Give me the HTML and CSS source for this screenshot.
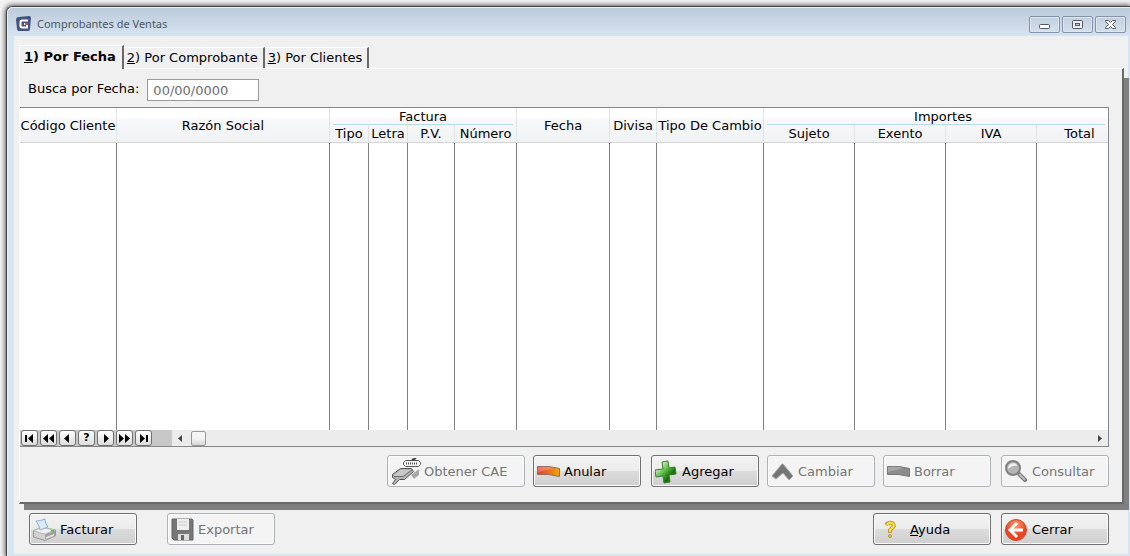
FILE: index.html
```
<!DOCTYPE html>
<html lang="es">

<head>
    <meta charset="UTF-8">
    <meta name="viewport" content="width=device-width, initial-scale=1.0">
    <title>Comprobantes de Ventas</title>
    <link rel="stylesheet" href="styles.css">
</head>

<body>
    <div class="window">
        <div class="title-bar">
            <svg class="logo" width="16" height="16" viewBox="0 0 16 16">
                <path d="M3 1 L13 0 Q15 0 15 2 L14 13 Q14 15 12 15 L3 15 Q1 15 1 13 L0 4 Q0 1 3 1Z" fill="#46527f"/>
                <path d="M12 4.500H6Q4.500 4.500 4.500 6V10Q4.500 11.500 6 11.500H11V8H8" fill="none" stroke="#fff" stroke-width="2"/>
                <path d="M9 7H12V9H9Z" fill="#e04040"/>
            </svg>
            <span class="title">Comprobantes de Ventas</span>
            <button class="caption" aria-label="Minimizar">
                <svg width="13" height="13" viewBox="0 0 13 13"><rect x="1.500" y="6.500" width="10" height="4" rx="1" fill="#fff" stroke="#535666"/></svg>
            </button>
            <button class="caption" aria-label="Maximizar">
                <svg width="13" height="13" viewBox="0 0 13 13"><rect x="1.500" y="2.500" width="10" height="8" rx="1" fill="#eee" stroke="#535666"/><rect x="4.500" y="5.500" width="4" height="2" fill="#c5d1de" stroke="#535666"/></svg>
            </button>
            <button class="caption" aria-label="Cerrar ventana">
                <svg width="13" height="13" viewBox="0 0 13 13"><path d="M1.500 2.500H4.500L6.500 4.500L8.500 2.500H11.500V3.500L8.500 6.500L11.500 9.500V10.500H8.500L6.500 8.500L4.500 10.500H1.500V9.500L4.500 6.500L1.500 3.500Z" fill="#fff" stroke="#535666"/></svg>
            </button>
        </div>

        <div class="content">
            <div class="tabs" role="tablist">
                <button class="tab active" role="tab" aria-selected="true"><u>1</u>) Por Fecha</button>
                <button class="tab" role="tab"><u>2</u>) Por Comprobante</button>
                <button class="tab" role="tab"><u>3</u>) Por Clientes</button>
            </div>

            <div class="panel">
                <div class="search">
                    <label for="fecha">Busca por Fecha:</label>
                    <input type="text" id="fecha" placeholder="00/00/0000">
                </div>

                <div class="browse">
                    <table>
                        <colgroup>
                            <col class="c-codigo"><col class="c-razon"><col class="c-tipo"><col class="c-tipo">
                            <col class="c-pv"><col class="c-numero"><col class="c-fecha"><col class="c-pv">
                            <col class="c-cambio"><col class="c-importe"><col class="c-importe"><col class="c-importe"><col>
                        </colgroup>
                        <thead>
                            <tr>
                                <th rowspan="2">Código Cliente</th>
                                <th rowspan="2">Razón Social</th>
                                <th class="group" colspan="4">Factura</th>
                                <th rowspan="2">Fecha</th>
                                <th rowspan="2">Divisa</th>
                                <th rowspan="2">Tipo De Cambio</th>
                                <th class="group total" colspan="4">Importes</th>
                            </tr>
                            <tr class="sub">
                                <th>Tipo</th>
                                <th>Letra</th>
                                <th>P.V.</th>
                                <th>Número</th>
                                <th>Sujeto</th>
                                <th>Exento</th>
                                <th>IVA</th>
                                <th class="total">Total</th>
                            </tr>
                        </thead>
                        <tbody>
                            <tr>
                                <td></td><td></td><td></td><td></td><td></td><td></td><td></td>
                                <td></td><td></td><td></td><td></td><td></td><td></td>
                            </tr>
                        </tbody>
                    </table>
                    <div class="nav">
                        <div class="vcr">
                            <button aria-label="Primero"><svg width="13" height="9" viewBox="0 0 13 9"><path d="M2 1H4V8H2ZM10 0V9L5 4.500Z"/></svg></button>
                            <button aria-label="Página anterior"><svg width="13" height="9" viewBox="0 0 13 9"><path d="M6 0V9L1 4.500ZM12 0V9L7 4.500Z"/></svg></button>
                            <button aria-label="Anterior"><svg width="13" height="9" viewBox="0 0 13 9"><path d="M8 0V9L3 4.500Z"/></svg></button>
                            <button>?</button>
                            <button aria-label="Siguiente"><svg width="13" height="9" viewBox="0 0 13 9"><path d="M5 0V9L10 4.500Z"/></svg></button>
                            <button aria-label="Página siguiente"><svg width="13" height="9" viewBox="0 0 13 9"><path d="M1 0V9L6 4.500ZM7 0V9L12 4.500Z"/></svg></button>
                            <button aria-label="Último"><svg width="13" height="9" viewBox="0 0 13 9"><path d="M3 0V9L8 4.500ZM9 1H11V8H9Z"/></svg></button>
                        </div>
                        <div class="scroll">
                            <svg width="5" height="7" viewBox="0 0 5 7"><path d="M4 0V7L0 3.500Z" fill="#444"/></svg>
                            <span class="thumb"></span>
                            <svg class="right" width="5" height="7" viewBox="0 0 5 7"><path d="M1 0V7L5 3.500Z" fill="#444"/></svg>
                        </div>
                    </div>
                </div>

                <div class="actions">
                    <button class="btn wide" disabled>
                        <svg width="30" height="28" viewBox="0 0 30 28">
                            <path d="M20 17L28 11V17L23 21Z" fill="#a8a8a8"/>
                            <path d="M12.500 4.500L14.500 2.500H27.500L29.500 4.500V6.500L27.500 8.500H14.500L12.500 6.500Z" fill="#f4f4f4" stroke="#555"/>
                            <path d="M15 5.500H27" stroke="#555" stroke-width="2" stroke-dasharray="1 1"/>
                            <path d="M21 2L25 0" stroke="#444" stroke-width="2"/>
                            <path d="M1.500 16.500L9.500 10.500H20.500L22.500 13.500L13.500 21.500H8.500L3.500 26.500L1.500 25.500L4.500 21.500L1.500 19.500Z" fill="#b4b4b4" stroke="#555"/>
                            <path d="M3 17L10 12H19L12 18H4Z" fill="#c8c8c8"/>
                            <path d="M3 18.500H12L21 12" fill="none" stroke="#707070"/>
                        </svg>
                        Obtener CAE
                    </button>
                    <button class="btn">
                        <svg width="24" height="24" viewBox="0 0 24 24">
                            <defs><linearGradient id="red"><stop offset="0" stop-color="#e2402a"/><stop offset="0.400" stop-color="#ea6030"/><stop offset="1" stop-color="#f0a800"/></linearGradient></defs>
                            <path d="M0.500 6.500Q12 5.500 22.500 8.500V16.500Q11 13.500 0.500 14.500Z" fill="url(#red)" stroke="#8a7068"/>
                            <path d="M1 7Q10 6 16 8Q10 10 1 12Z" fill="#fff" opacity=".25"/>
                        </svg>
                        Anular
                    </button>
                    <button class="btn gap">
                        <svg width="24" height="24" viewBox="0 0 24 24">
                            <defs><linearGradient id="green" x2="1" y2="1"><stop offset="0.200" stop-color="#d5f4bd"/><stop offset="0.500" stop-color="#4caf36"/><stop offset="0.700" stop-color="#17700c"/></linearGradient></defs>
                            <path d="M7 2L13 1L14 8L20 7L21 14L14 15L15 22L9 23L8 16L1 17L0 10L8 9Z" fill="url(#green)" stroke="#367a30"/>
                        </svg>
                        Agregar
                    </button>
                    <button class="btn" disabled>
                        <svg width="24" height="24" viewBox="0 0 24 24"><path d="M1 16L11 4H12L22 16L18 20L12 13L5 19Z" fill="#757575" stroke="#aaa"/></svg>
                        Cambiar
                    </button>
                    <button class="btn" disabled>
                        <svg width="24" height="24" viewBox="0 0 24 24">
                            <path d="M0.500 6.500Q12 5.500 22.500 8.500V16.500Q11 13.500 0.500 14.500Z" fill="#8c8c8c" stroke="#777"/>
                            <path d="M1 7Q10 6 16 8Q10 10 1 12Z" fill="#a8a8a8"/>
                        </svg>
                        Borrar
                    </button>
                    <button class="btn gap" disabled>
                        <svg width="24" height="24" viewBox="0 0 24 24">
                            <path d="M13 13L20 20" stroke="#777" stroke-width="4" stroke-linecap="round"/>
                            <path d="M14 14L20 20" stroke="#bbb" stroke-width="2"/>
                            <circle cx="8" cy="8" r="7" fill="#b5b5b5" stroke="#808080" stroke-width="2"/>
                            <path d="M3 9Q3 3 9 3Q12 4 12 6Q7 5 3 9Z" fill="#eee"/>
                        </svg>
                        Consultar
                    </button>
                </div>
            </div>

            <div class="footer">
                <button class="btn">
                    <svg width="24" height="24" viewBox="0 0 24 24">
                        <path d="M0.500 13L8 9L22.500 12V18L12 22.500L0.500 19Z" fill="#d2d2d2" stroke="#999"/>
                        <path d="M1 13L8 9.500L22 12L12 16Z" fill="#f2f2f2" stroke="#bbb"/>
                        <path d="M3 3Q8 3 12 1Q12 6 15 9L7 12Q6 7 3 3Z" fill="#d8e9fb" stroke="#93b0cc"/>
                        <path d="M12 16.500V22L22 18V12.500Z" fill="#a2a2a2"/>
                        <path d="M13 19L21 16V18L13 21Z" fill="#e2e2e2"/>
                        <rect x="18" y="12" width="3" height="2" fill="#4dcc40"/>
                    </svg>
                    Facturar
                </button>
                <button class="btn export" disabled>
                    <svg width="24" height="24" viewBox="0 0 24 24">
                        <path d="M1 1H21L22 2V22H3L1 20Z" fill="#777" stroke="#666"/>
                        <path d="M6 1H18V12H6Z" fill="#eee"/>
                        <path d="M8 4H16M8 7H16" stroke="#ccc"/>
                        <path d="M7 16H18V22H7Z" fill="#ddd"/>
                        <path d="M10 17H13V22H10Z" fill="#666"/>
                    </svg>
                    Exportar
                </button>
                <button class="btn help">
                    <svg width="24" height="24" viewBox="0 0 24 24">
                        <path d="M9 7Q11 4 15 5Q18 7 16 9L13 12V15" fill="none" stroke="#c49c30" stroke-width="4"/>
                        <path d="M10 7Q11 4 15 5Q18 7 16 9L13 12V14" fill="none" stroke="#f8e04a" stroke-width="2"/>
                        <circle cx="13" cy="18" r="1.500" fill="#f3d63c" stroke="#b8922c"/>
                    </svg>
                    <span><u>A</u>yuda</span>
                </button>
                <button class="btn gap">
                    <svg width="24" height="24" viewBox="0 0 24 24">
                        <defs><radialGradient id="back" cy=".25"><stop offset="0" stop-color="#ff9a72"/><stop offset="1" stop-color="#ea4420"/></radialGradient></defs>
                        <circle cx="11" cy="12" r="10.500" fill="url(#back)" stroke="#c7482e"/>
                        <path d="M12 5L5 12L12 19M6 12H18" fill="none" stroke="#fff" stroke-width="3"/>
                    </svg>
                    Cerrar
                </button>
            </div>
        </div>
    </div>
</body>

</html>
```
FILE: styles.css
```
* {
    box-sizing: border-box;
}

body {
    margin: 0;
    padding: 6px 0 0 6px;
    background-color: #f4f4f4;
    font-family: "DejaVu Sans", Verdana, sans-serif;
    font-size: 13px;
    line-height: 16px;
    color: #000;
    overflow-x: hidden;
}

button,
input {
    font: inherit;
    color: inherit;
    margin: 0;
}

svg {
    flex: none;
}

.window {
    min-height: calc(100vh - 6px);
    padding: 0 2px 2px 7px;
    border-top: 1px solid #444;
    border-left: 1px solid #444;
    border-top-left-radius: 6px;
    background: linear-gradient(#bccad9, #d7e4f2 30px);
    box-shadow: inset 1px 1px 0 #e8eff7, 0 0 5px 1px #555;
}

.title-bar {
    display: flex;
    align-items: center;
    gap: 2px;
    height: 29px;
    padding: 5px 2px 0 2px;
}

.title {
    flex: 1;
    padding-left: 3px;
    font-family: "Noto Sans", "Segoe UI", sans-serif;
    font-size: 11px;
    color: #4b5763;
}

.caption {
    display: flex;
    align-items: center;
    justify-content: center;
    width: 31px;
    height: 17px;
    padding: 0;
    border: 1px solid #8492ab;
    border-radius: 2px;
    background: linear-gradient(#c2cfdd, #d3e0ee);
    box-shadow: inset 0 0 0 1px #dce6f0;
}

.content {
    min-height: 518px;
    padding: 9px 4px 9px 5px;
    background-color: #f0f0f0;
}

.tabs {
    display: flex;
    align-items: flex-end;
    height: 23px;
}

.tab {
    height: 21px;
    padding: 0 5px 0 3px;
    border: 0;
    border-top: 1px solid #fff;
    border-right: 2px solid #696969;
    background-color: #f0f0f0;
    white-space: nowrap;
}

.tab.active {
    position: relative;
    z-index: 1;
    height: 24px;
    margin-bottom: -1px;
    padding: 0 6px 2px 4px;
    border-left: 1px solid #fff;
    border-top-left-radius: 2px;
    font-weight: bold;
}

.panel {
    position: relative;
    border: 1px solid #fff;
    border-right: 2px solid #696969;
    border-bottom: 2px solid #696969;
    padding-right: 13px;
    padding-bottom: 15px;
}

/* hard drop shadow on the right and bottom edges */
.panel::after {
    content: "";
    position: absolute;
    top: 9px;
    left: 4px;
    right: -7px;
    bottom: -8px;
    border-right: 5px solid #808080;
    border-bottom: 6px solid #808080;
    pointer-events: none;
}

.search {
    display: flex;
    align-items: center;
    gap: 8px;
    height: 38px;
    padding: 4px 0 0 8px;
}

.search label {
    padding-bottom: 2px;
}

.search input {
    width: 112px;
    height: 22px;
    padding: 0 5px;
    border: 1px solid #999;
    background-color: #fff;
}

.search input::placeholder {
    color: #6d6d6d;
    opacity: 1;
}

.browse {
    border: 1px solid #828790;
    border-left: 0;
    background-color: #fff;
}

table {
    width: 100%;
    table-layout: fixed;
    border-collapse: separate;
    border-spacing: 0;
}

.c-codigo { width: 97px; }
.c-razon { width: 213px; }
.c-tipo { width: 39px; }
.c-pv { width: 47px; }
.c-numero { width: 62px; }
.c-fecha { width: 93px; }
.c-cambio { width: 107px; }
.c-importe { width: 91px; }

thead {
    background: linear-gradient(#fff 10px, #f7f8fa 11px, #f1f2f4);
}

th {
    height: 18px;
    padding: 1px 0 0;
    border-right: 1px solid #e2e3e5;
    border-bottom: 1px solid #d5d5d5;
    font-weight: normal;
    white-space: nowrap;
}

th.group {
    height: 16px;
    border-bottom: 0;
    background: linear-gradient(#b9dbe6, #b9dbe6) 3px 100% / calc(100% - 6px) 1px no-repeat;
}

th.total {
    padding-left: 14px;
}

th:last-child,
td:last-child {
    border-right: 0;
}

.sub th:nth-child(4) {
    border-right: 1px solid #e2e3e5;
}

td {
    height: 287px;
    padding: 0;
    border-right: 1px solid #808080;
}

.nav {
    display: flex;
    height: 16px;
}

.vcr {
    display: flex;
    gap: 2px;
    width: 152px;
    padding-left: 1px;
    background-color: #c8c8c8;
}

.vcr button {
    display: flex;
    align-items: center;
    justify-content: center;
    width: 17px;
    height: 16px;
    padding: 0;
    border: 1px solid #707070;
    border-radius: 3px;
    background: linear-gradient(#fff, #ddd);
    font-size: 11px;
    font-weight: bold;
}

.scroll {
    flex: 1;
    display: flex;
    align-items: center;
    gap: 8px;
    padding: 0 6px;
    background-color: #ececec;
}

.thumb {
    width: 15px;
    height: 15px;
    border: 1px solid #999;
    border-radius: 2px;
    background: linear-gradient(#f4f4f4 50%, #d6d6d6);
}

.scroll .right {
    margin-left: auto;
}

.actions,
.footer {
    display: flex;
    gap: 8px;
}

.actions {
    justify-content: flex-end;
    padding-top: 8px;
}

.footer {
    position: relative;
    padding: 9px 15px 0 10px;
}

.btn {
    display: flex;
    align-items: center;
    gap: 3px;
    width: 108px;
    height: 32px;
    padding: 1px 0 0 3px;
    border: 1px solid #707070;
    border-radius: 3px;
    background: linear-gradient(#f3f3f3, #ebebeb 50%, #dcdcdc 50%, #cfcfcf);
    box-shadow: inset 0 0 0 1px #fbfbfb;
    white-space: nowrap;
}

.btn:disabled {
    border-color: #adb2b5;
    background: #f4f4f4;
    color: #757575;
}

.btn.wide {
    width: 138px;
}

.btn.gap {
    margin-left: 2px;
}

.btn.export {
    margin-left: 22px;
}

.btn.help {
    width: 118px;
    margin-left: auto;
    gap: 9px;
}
```
